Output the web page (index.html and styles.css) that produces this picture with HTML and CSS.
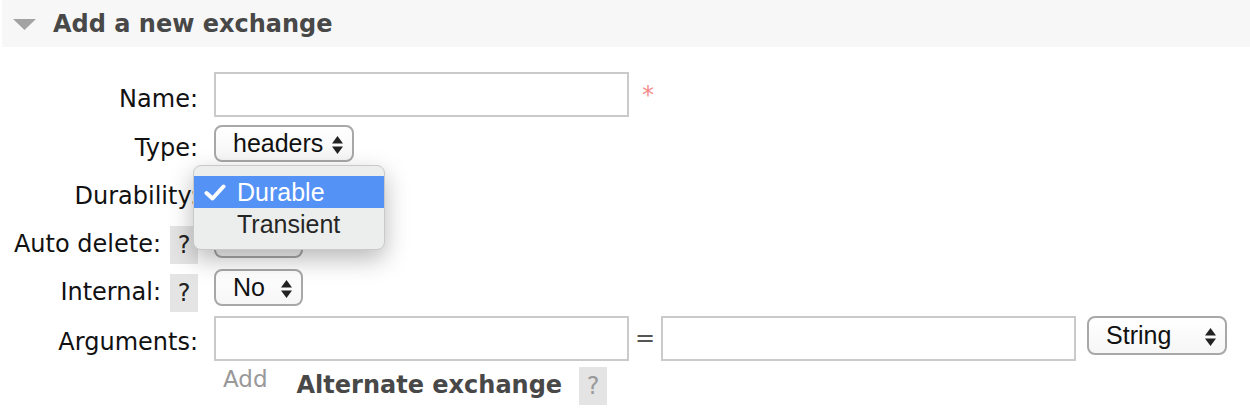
FILE: index.html
```html
<!DOCTYPE html>
<html>
<head>
<meta charset="utf-8">
<link rel="stylesheet" href="styles.css">
</head>
<body>
<div class="section">
  <h2 class="section-head">
    <svg class="tri" width="23" height="11" viewBox="0 0 23 11"><polygon points="0,0 23,0 11.5,11" fill="#a3a3a3"/></svg>
    Add a new exchange
  </h2>
  <form class="form">
    <div class="label"><span>Name:</span></div>
    <div class="field">
      <div class="text-input"></div>
      <span class="mand">*</span>
    </div>

    <div class="label"><span>Type:</span></div>
    <div class="field">
      <div class="select wide"><span>headers</span>
        <svg class="arrows" width="11" height="18" viewBox="0 0 11 18"><polygon points="5.5,0 11,7.5 0,7.5"/><polygon points="0,10.5 11,10.5 5.5,18"/></svg>
      </div>
    </div>

    <div class="label"><span>Durability:</span></div>
    <div class="field menu-anchor">
      <div class="select narrow"><span class="covered">Durable</span>
        <svg class="arrows" width="11" height="18" viewBox="0 0 11 18"><polygon points="5.5,0 11,7.5 0,7.5"/><polygon points="0,10.5 11,10.5 5.5,18"/></svg>
      </div>
      <div class="menu">
        <div class="menu-item selected">
          <svg class="check" width="22" height="17" viewBox="0 0 22 17"><path d="M2.5 9 L8.5 14.5 L19.5 2.5" fill="none" stroke="#fff" stroke-width="4" stroke-linecap="round" stroke-linejoin="round"/></svg>
          <span>Durable</span>
        </div>
        <div class="menu-item"><span>Transient</span></div>
      </div>
    </div>

    <div class="label"><span>Auto delete:</span><span class="help">?</span></div>
    <div class="field">
      <div class="select narrow"><span class="covered">No</span>
        <svg class="arrows" width="11" height="18" viewBox="0 0 11 18"><polygon points="5.5,0 11,7.5 0,7.5"/><polygon points="0,10.5 11,10.5 5.5,18"/></svg>
      </div>
    </div>

    <div class="label"><span>Internal:</span><span class="help">?</span></div>
    <div class="field">
      <div class="select narrow"><span>No</span>
        <svg class="arrows" width="11" height="18" viewBox="0 0 11 18"><polygon points="5.5,0 11,7.5 0,7.5"/><polygon points="0,10.5 11,10.5 5.5,18"/></svg>
      </div>
    </div>

    <div class="label"><span>Arguments:</span></div>
    <div class="field">
      <div class="text-input"></div>
      <span class="eq">=</span>
      <div class="text-input"></div>
      <div class="select wide string"><span>String</span>
        <svg class="arrows" width="11" height="18" viewBox="0 0 11 18"><polygon points="5.5,0 11,7.5 0,7.5"/><polygon points="0,10.5 11,10.5 5.5,18"/></svg>
      </div>
    </div>

    <div class="field bottom">
      <span class="add">Add</span>
      <span class="alt">Alternate exchange</span>
      <span class="help light">?</span>
    </div>
  </form>
</div>
</body>
</html>
```
FILE: styles.css
```css
html, body {
  margin: 0;
  padding: 0;
  background: #fff;
}
body {
  font-family: "DejaVu Sans", Verdana, sans-serif;
  font-size: 24px;
  color: #111;
  width: 1250px;
  height: 410px;
  overflow: hidden;
}
.section-head {
  margin: 0 0 0 2px;
  height: 47px;
  background: #f7f7f7;
  display: flex;
  align-items: center;
  padding-left: 11px;
  font-size: 24px;
  font-weight: bold;
  color: #484848;
  line-height: 28px;
}
.tri {
  margin-right: 17px;
  margin-top: 1px;
}
.form {
  margin-top: 23px;
  display: grid;
  grid-template-columns: 198px max-content;
  grid-template-rows: 49px 49px 47px 49px 47px 54px auto;
  column-gap: 16px;
  align-items: center;
}
.label {
  display: flex;
  justify-content: flex-end;
  align-items: center;
  padding-top: 8px;
  line-height: 28px;
  white-space: nowrap;
  color: #111;
}
.help {
  display: inline-flex;
  align-items: center;
  justify-content: center;
  width: 28px;
  height: 38px;
  margin-left: 9px;
  margin-top: 2px;
  background: #e4e4e4;
  color: #222;
  line-height: 28px;
}
.field {
  display: flex;
  align-items: center;
  grid-column: 2;
}
.text-input {
  box-sizing: border-box;
  width: 415px;
  height: 45px;
  border: 2px solid #cacaca;
  background: #fff;
}
.mand {
  color: #f48b8b;
  margin-left: 13px;
  line-height: 28px;
}
.eq {
  color: #555;
  margin: 0 6px 0 6px;
  line-height: 28px;
}
.select {
  box-sizing: border-box;
  height: 37px;
  border: 2px solid #a8a8a8;
  border-radius: 8px;
  background: linear-gradient(#fff, #f6f6f6);
  display: flex;
  align-items: center;
  justify-content: space-between;
  padding: 0 9px 0 17px;
  font-family: "Liberation Sans", Arial, sans-serif;
  font-size: 25px;
  color: #111;
}
.select .covered {
  visibility: hidden;
}
.select.wide {
  width: 140px;
}
.select.narrow {
  width: 89px;
}
.select.string {
  margin-left: 11px;
  height: 39px;
  margin-bottom: 5px;
}
.arrows {
  fill: #222;
  flex: none;
  margin-top: 2px;
}
.menu-anchor {
  position: relative;
}
.menu {
  position: absolute;
  left: -21px;
  top: -8px;
  width: 192px;
  height: 85px;
  box-sizing: border-box;
  padding-top: 10px;
  border-radius: 8px;
  background: #eceeee;
  border: 1px solid #c9c9c9;
  box-shadow: 0 9px 24px rgba(0, 0, 0, 0.28);
  z-index: 5;
  font-family: "Liberation Sans", Arial, sans-serif;
  font-size: 25px;
  color: #262626;
}
.menu-item {
  height: 33px;
  display: flex;
  align-items: center;
  padding-left: 43px;
  position: relative;
}
.menu-item.selected {
  background: #5592f5;
  color: #fff;
  height: 32px;
}
.check {
  position: absolute;
  left: 10px;
  top: 8px;
}
.bottom {
  align-self: start;
  align-items: flex-start;
}
.add {
  color: #999;
  margin-left: 9px;
  line-height: 28px;
  font-size: 23px;
}
.alt {
  font-weight: bold;
  color: #484848;
  margin-left: 29px;
  margin-top: 6px;
  line-height: 28px;
}
.help.light {
  color: #9a9a9a;
  margin-left: 17px;
  margin-top: 2px;
}
```
